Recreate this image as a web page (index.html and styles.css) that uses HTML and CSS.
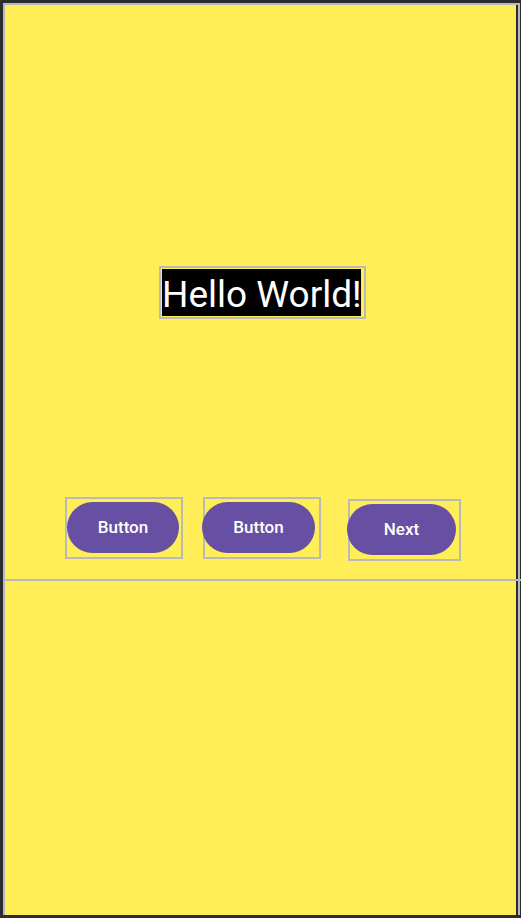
FILE: index.html
```html
<!DOCTYPE html>
<html>
<head>
<meta charset="utf-8">
<link rel="stylesheet" href="styles.css">
</head>
<body>
<div class="frame">
  <div class="screen">
    <div class="hello-row">
      <div class="sel sel-hello">
        <div class="hello">Hello World!</div>
      </div>
    </div>
    <div class="btn-row">
      <div class="sel sel-b1"><div class="pill pill-b1">Button</div></div>
      <div class="sel sel-b2"><div class="pill pill-b2">Button</div></div>
      <div class="sel sel-b3"><div class="pill pill-b3">Next</div></div>
    </div>
    <div class="guide"></div>
  </div>
</div>
</body>
</html>
```

FILE: styles.css
```css
html, body {
  margin: 0;
  padding: 0;
}
body {
  background: #2b2d30;
  width: 521px;
  height: 918px;
  overflow: hidden;
  font-family: Roboto, "Noto Sans", sans-serif;
}
.frame {
  margin: 3px 0 0 3px;
  width: 513px;
  border-top: 2px solid #b9b9b9;
  border-left: 2px solid #b9b9b9;
  border-right: 2px solid #b9b9b9;
}
.screen {
  width: 511px;
  height: 910px;
  background: #ffee58;
  border-right: 2px solid #2b2d30;
  display: flex;
  flex-direction: column;
}
.sel {
  box-sizing: border-box;
  border: 2px solid #bababa;
}
.hello-row {
  display: flex;
  padding-left: 154px;
  margin-top: 261px;
}
.sel-hello {
  padding: 1px 3px 1px 1px;
}
.hello {
  box-sizing: border-box;
  width: 199px;
  height: 47px;
  background: #000;
  color: #fff;
  font-size: 37px;
  line-height: 42px;
  padding-top: 4.5px;
  white-space: nowrap;
}
.btn-row {
  display: flex;
  align-items: flex-start;
  padding-left: 60px;
  margin-top: 178px;
}
.sel-b1, .sel-b2, .sel-b3 {
  height: 62px;
}
.sel-b1 {
  width: 118px;
}
.sel-b2 {
  width: 118px;
  margin-left: 20px;
}
.sel-b3 {
  width: 113px;
  margin-left: 27px;
  margin-top: 2px;
}
.pill {
  height: 51px;
  border-radius: 26px;
  background: #6750a4;
  color: #fff;
  font-size: 17px;
  font-weight: 500;
  display: flex;
  align-items: center;
  justify-content: center;
  margin-top: 2.5px;
}
.pill-b1 {
  width: 112px;
}
.pill-b2 {
  width: 113px;
  margin-left: -3px;
}
.pill-b3 {
  width: 109px;
  margin-left: -3px;
}
.guide {
  height: 2px;
  background: #b8b8b8;
  margin-top: 18px;
  margin-left: -2px;
  margin-right: -6px;
}
```
